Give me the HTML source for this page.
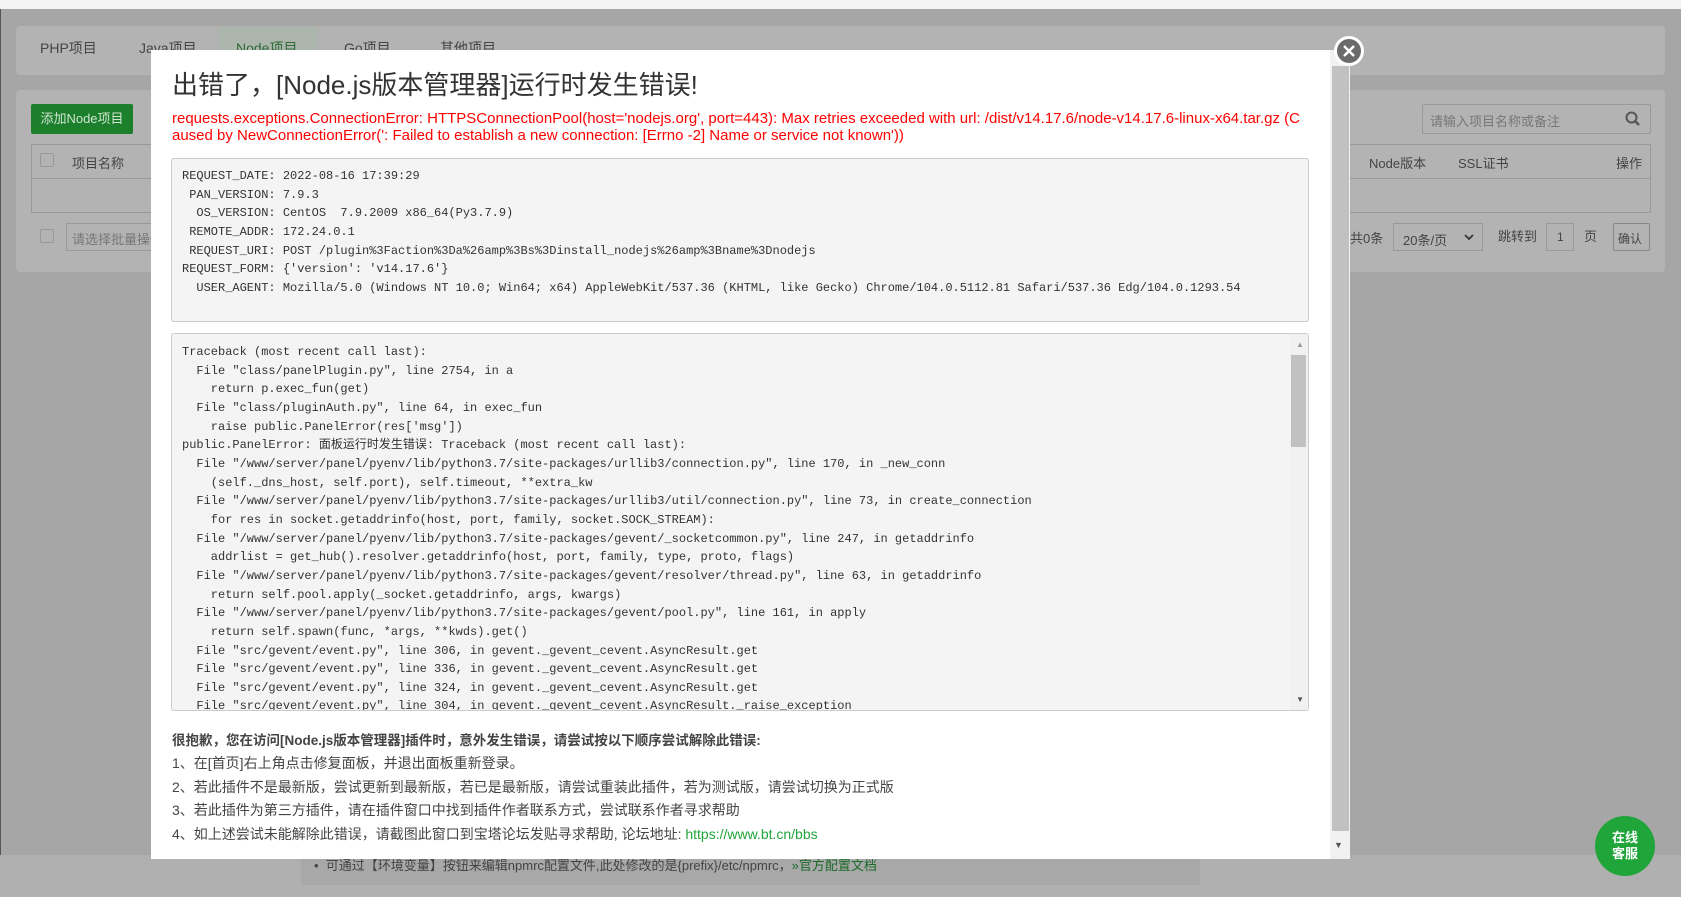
<!DOCTYPE html>
<html><head><meta charset="utf-8"><style>
*{margin:0;padding:0;box-sizing:border-box}
body{width:1681px;height:897px;overflow:hidden;background:#a6a6a6;font-family:"Liberation Sans","Noto Sans CJK SC",sans-serif;position:relative}
.abs{position:absolute}
.top{left:0;top:0;width:1681px;height:9px;background:#f3f3f3}
.lline{left:0;top:9px;width:1px;height:888px;background:#555}
.panel{background:#b3b3b3;border-radius:4px}
.t{color:#444;font-size:14px;position:absolute}
.mono{font-family:"Liberation Mono","Noto Sans CJK SC",monospace;font-size:12px;color:#333;line-height:18.65px;white-space:pre}
.dlg{left:151px;top:50px;width:1199px;height:809px;background:#fff;overflow:hidden}
.box{position:absolute;background:#f4f4f4;border:1px solid #ccc;border-radius:3px}
.red{color:#f00;font-size:15px;line-height:16.5px}
.bt{font-size:14px;color:#444;position:absolute;left:21px}
</style></head><body>
<div class="abs top"></div><div class="abs lline"></div>
<div class="abs panel" style="left:16px;top:26px;width:1649px;height:49px"></div>
<div class="abs" style="left:218px;top:26px;width:100px;height:49px;background:#adb6ad"></div>
<div class="t" style="left:40px;top:38px">PHP项目</div>
<div class="t" style="left:139px;top:38px">Java项目</div>
<div class="t" style="left:236px;top:38px;color:#2d6a37">Node项目</div>
<div class="t" style="left:344px;top:38px">Go项目</div>
<div class="t" style="left:440px;top:38px">其他项目</div>
<div class="abs panel" style="left:16px;top:90px;width:1649px;height:182px"></div>
<div class="abs" style="left:31px;top:104px;width:102px;height:30px;background:#1c7f2c;border-radius:2px;color:#cfe3d1;font-size:13px;line-height:30px;text-align:center">添加Node项目</div>
<div class="abs" style="left:31px;top:144px;width:1620px;height:69px;border:1px solid #999"></div>
<div class="abs" style="left:31px;top:178px;width:1620px;height:1px;background:#999"></div>
<div class="abs" style="left:40px;top:153px;width:14px;height:14px;border:1px solid #999;border-radius:2px"></div>
<div class="t" style="left:72px;top:153px;font-size:13px">项目名称</div>
<div class="t" style="left:1369px;top:153px;font-size:13px">Node版本</div>
<div class="t" style="left:1458px;top:153px;font-size:13px">SSL证书</div>
<div class="t" style="left:1616px;top:153px;font-size:13px">操作</div>
<div class="abs" style="left:1422px;top:104px;width:229px;height:30px;border:1px solid #999;border-radius:2px"></div>
<div class="t" style="left:1430px;top:111px;font-size:13px;color:#777">请输入项目名称或备注</div>
<svg class="abs" style="left:1625px;top:111px" width="16" height="16"><circle cx="6.5" cy="6.5" r="5" fill="none" stroke="#555" stroke-width="2"/><line x1="10" y1="10" x2="14" y2="14" stroke="#555" stroke-width="2.4"/></svg>
<div class="abs" style="left:40px;top:229px;width:14px;height:14px;border:1px solid #999;border-radius:2px"></div>
<div class="abs" style="left:66px;top:223px;width:100px;height:28px;border:1px solid #999"></div>
<div class="t" style="left:72px;top:229px;font-size:13px;color:#777">请选择批量操作</div>
<div class="t" style="left:1350px;top:228px;font-size:13px">共0条</div>
<div class="abs" style="left:1393px;top:223px;width:90px;height:28px;border:1px solid #999"></div>
<div class="t" style="left:1403px;top:230px;font-size:13px">20条/页</div>
<svg class="abs" style="left:1464px;top:233px" width="10" height="8"><path d="M1 2L5 6L9 2" fill="none" stroke="#333" stroke-width="1.8"/></svg>
<div class="t" style="left:1498px;top:226px;font-size:13px">跳转到</div>
<div class="abs" style="left:1546px;top:223px;width:28px;height:28px;border:1px solid #999"></div>
<div class="t" style="left:1557px;top:230px;font-size:12px">1</div>
<div class="t" style="left:1584px;top:226px;font-size:13px">页</div>
<div class="abs" style="left:1613px;top:223px;width:37px;height:28px;border:1px solid #888;border-radius:2px"></div>
<div class="t" style="left:1618px;top:230px;font-size:12px">确认</div>
<div class="abs" style="left:0;top:855px;width:1681px;height:42px;background:#b0b0b0"></div>
<div class="abs" style="left:301px;top:847px;width:899px;height:38px;background:#a8a8a8"></div>
<div class="t" style="left:314px;top:855px;font-size:13px">• &nbsp;可通过【环境变量】按钮来编辑npmrc配置文件,此处修改的是{prefix}/etc/npmrc，<span style="color:#1c6a2a">»官方配置文档</span></div>

<div class="abs dlg">
 <div class="abs" style="left:21px;top:15px;font-size:26px;color:#333">出错了，[Node.js版本管理器]运行时发生错误!</div>
 <div class="abs red" style="left:21px;top:61px;width:1150px">requests.exceptions.ConnectionError: HTTPSConnectionPool(host='nodejs.org', port=443): Max retries exceeded with url: /dist/v14.17.6/node-v14.17.6-linux-x64.tar.gz (C<br>aused by NewConnectionError(': Failed to establish a new connection: [Errno -2] Name or service not known'))</div>
 <div class="box" style="left:20px;top:108px;width:1138px;height:164px"><div class="mono" style="position:absolute;left:10px;top:8px">REQUEST_DATE: 2022-08-16 17:39:29
 PAN_VERSION: 7.9.3
  OS_VERSION: CentOS  7.9.2009 x86_64(Py3.7.9)
 REMOTE_ADDR: 172.24.0.1
 REQUEST_URI: POST /plugin%3Faction%3Da%26amp%3Bs%3Dinstall_nodejs%26amp%3Bname%3Dnodejs
REQUEST_FORM: {'version': 'v14.17.6'}
  USER_AGENT: Mozilla/5.0 (Windows NT 10.0; Win64; x64) AppleWebKit/537.36 (KHTML, like Gecko) Chrome/104.0.5112.81 Safari/537.36 Edg/104.0.1293.54</div></div>
 <div class="box" style="left:20px;top:283px;width:1138px;height:378px;overflow:hidden"><div class="mono" style="position:absolute;left:10px;top:9px">Traceback (most recent call last):
  File "class/panelPlugin.py", line 2754, in a
    return p.exec_fun(get)
  File "class/pluginAuth.py", line 64, in exec_fun
    raise public.PanelError(res['msg'])
public.PanelError: 面板运行时发生错误: Traceback (most recent call last):
  File "/www/server/panel/pyenv/lib/python3.7/site-packages/urllib3/connection.py", line 170, in _new_conn
    (self._dns_host, self.port), self.timeout, **extra_kw
  File "/www/server/panel/pyenv/lib/python3.7/site-packages/urllib3/util/connection.py", line 73, in create_connection
    for res in socket.getaddrinfo(host, port, family, socket.SOCK_STREAM):
  File "/www/server/panel/pyenv/lib/python3.7/site-packages/gevent/_socketcommon.py", line 247, in getaddrinfo
    addrlist = get_hub().resolver.getaddrinfo(host, port, family, type, proto, flags)
  File "/www/server/panel/pyenv/lib/python3.7/site-packages/gevent/resolver/thread.py", line 63, in getaddrinfo
    return self.pool.apply(_socket.getaddrinfo, args, kwargs)
  File "/www/server/panel/pyenv/lib/python3.7/site-packages/gevent/pool.py", line 161, in apply
    return self.spawn(func, *args, **kwds).get()
  File "src/gevent/event.py", line 306, in gevent._gevent_cevent.AsyncResult.get
  File "src/gevent/event.py", line 336, in gevent._gevent_cevent.AsyncResult.get
  File "src/gevent/event.py", line 324, in gevent._gevent_cevent.AsyncResult.get
  File "src/gevent/event.py", line 304, in gevent._gevent_cevent.AsyncResult._raise_exception</div>
  <div class="abs" style="right:0;top:0;width:18px;height:376px;background:#f1f1f1"></div>
  <div class="abs" style="right:2px;top:21px;width:15px;height:92px;background:#c1c1c1"></div>
  <div class="abs" style="right:4px;top:6px;font-size:8px;color:#999">▲</div>
  <div class="abs" style="right:4px;top:361px;font-size:8px;color:#555">▼</div>
 </div>
 <div class="bt" style="top:679px;font-weight:bold;font-size:13.5px">很抱歉，您在访问[Node.js版本管理器]插件时，意外发生错误，请尝试按以下顺序尝试解除此错误:</div>
 <div class="bt" style="top:703px">1、在[首页]右上角点击修复面板，并退出面板重新登录。</div>
 <div class="bt" style="top:727px">2、若此插件不是最新版，尝试更新到最新版，若已是最新版，请尝试重装此插件，若为测试版，请尝试切换为正式版</div>
 <div class="bt" style="top:750px">3、若此插件为第三方插件，请在插件窗口中找到插件作者联系方式，尝试联系作者寻求帮助</div>
 <div class="bt" style="top:774px">4、如上述尝试未能解除此错误，请截图此窗口到宝塔论坛发贴寻求帮助, 论坛地址: <span style="color:#20a53a">https://www.bt.cn/bbs</span></div>
 <div class="abs" style="left:1179px;top:0;width:20px;height:809px;background:#f1f1f1"></div>
 <div class="abs" style="left:1181px;top:16px;width:17px;height:765px;background:#c1c1c1"></div>
 <div class="abs" style="left:1183px;top:790px;font-size:9px;color:#555">▼</div>
</div>
<div class="abs" style="left:1334px;top:36px;width:30px;height:30px;border-radius:50%;background:#6b6b6b;border:3px solid #fff"></div>
<svg class="abs" style="left:1341px;top:43px" width="16" height="16"><path d="M3 3L13 13M13 3L3 13" stroke="#fff" stroke-width="2.4"/></svg>
<div class="abs" style="left:1595px;top:816px;width:60px;height:60px;border-radius:50%;background:#20a53a;color:#fff;font-size:13px;font-weight:bold;text-align:center;line-height:16px;padding-top:14px">在线<br>客服</div>
</body></html>
